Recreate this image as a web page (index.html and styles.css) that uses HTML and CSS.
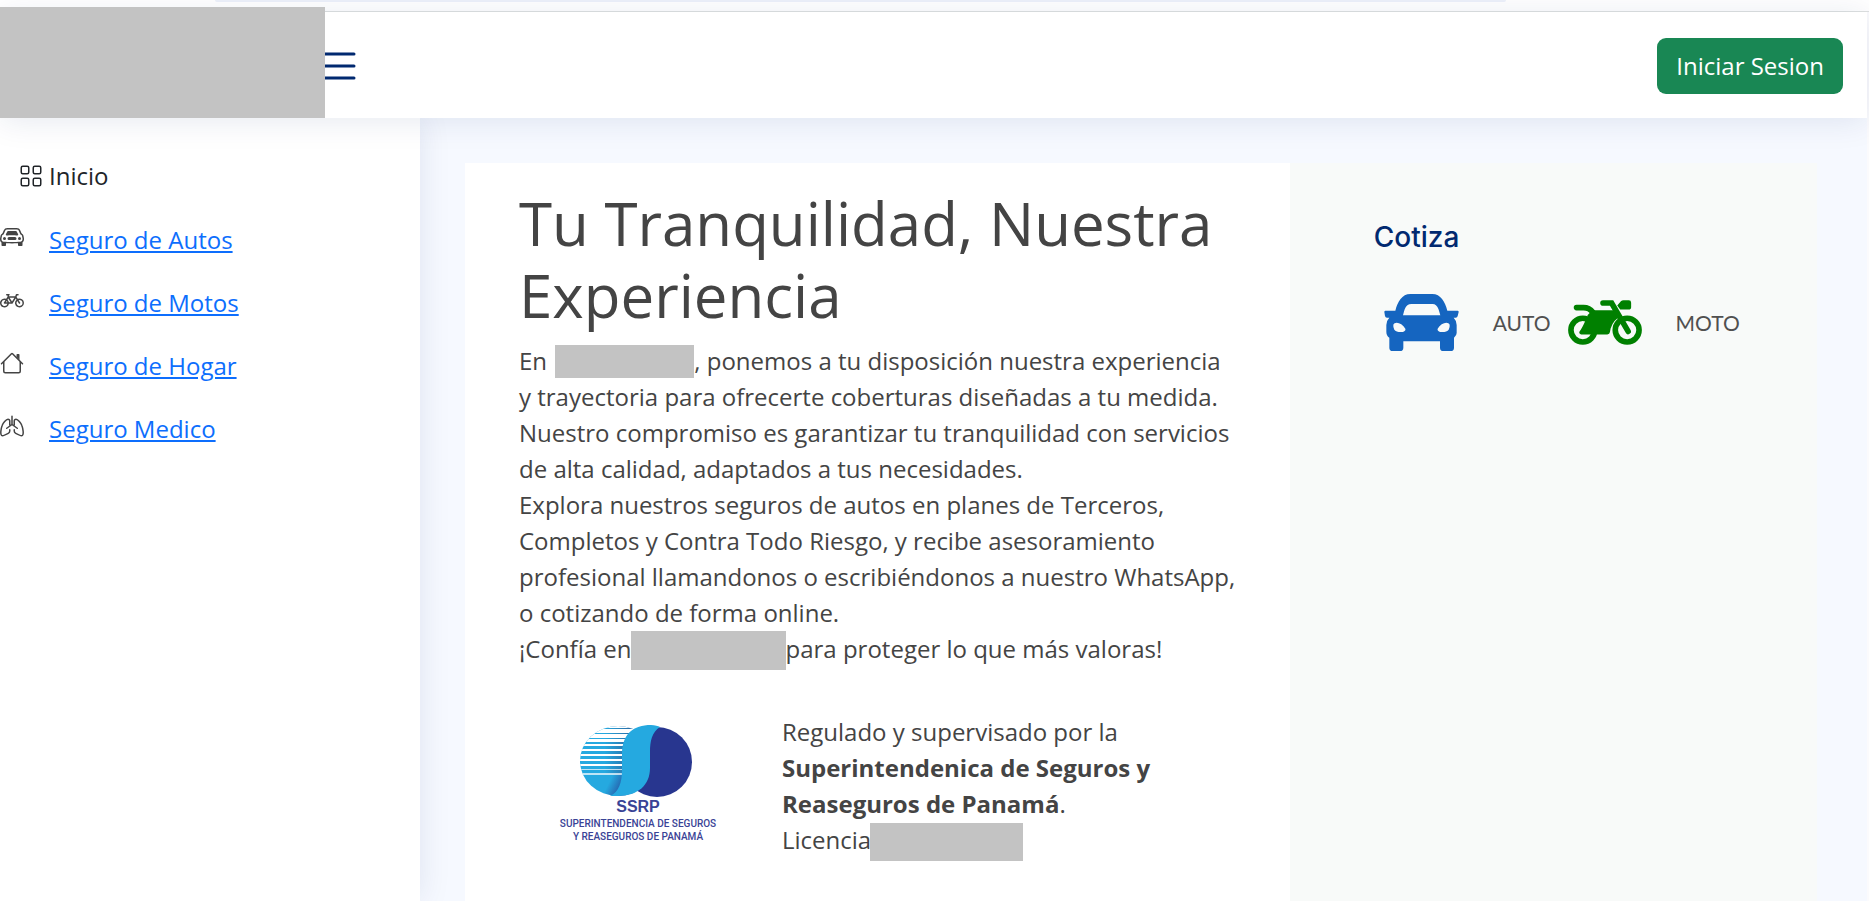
FILE: index.html
```html
<!DOCTYPE html>
<html lang="es">
<head>
<meta charset="utf-8">
<title>Seguros</title>
<link rel="stylesheet" href="styles.css">
</head>
<body>
<div class="browser-edge"><div class="address-bar"></div></div>
<header class="header">
  <div class="brand"></div>
  <button class="toggle" type="button" aria-label="Menú">
    <svg viewBox="0 0 16 16" width="48" height="48" fill="none" stroke="currentColor" stroke-linecap="round"><path d="M3 4h10M3 8h10M3 12h10"/></svg>
  </button>
  <button class="login" type="button">Iniciar Sesion</button>
</header>
<div class="body">
  <nav class="sidebar">
    <div class="home">
      <svg viewBox="0 0 16 16" width="24" height="24" fill="none" stroke="currentColor"><rect x="1.5" y="1.5" width="5" height="5" rx="1"/><rect x="9.5" y="1.5" width="5" height="5" rx="1"/><rect x="1.5" y="9.5" width="5" height="5" rx="1"/><rect x="9.5" y="9.5" width="5" height="5" rx="1"/></svg>
      <span>Inicio</span>
    </div>
    <ul class="menu">
      <li><svg viewBox="0 0 16 16" width="24" height="24" fill="currentColor"><path d="M4 9a1 1 0 1 1-2 0 1 1 0 0 1 2 0Zm10 0a1 1 0 1 1-2 0 1 1 0 0 1 2 0ZM6 8a1 1 0 0 0 0 2h4a1 1 0 1 0 0-2H6ZM4.862 4.276 3.906 6.19a.51.51 0 0 0 .497.731c.91-.073 2.35-.17 3.597-.17 1.247 0 2.688.097 3.597.17a.51.51 0 0 0 .497-.731l-.956-1.913A.5.5 0 0 0 10.691 4H5.309a.5.5 0 0 0-.447.276Z"/><path fill-rule="evenodd" d="M2.52 3.515A2.5 2.5 0 0 1 4.82 2h6.362c1 0 1.904.596 2.298 1.515l.792 1.848c.075.175.21.319.38.404.5.25.855.715.965 1.262l.335 1.679c.033.161.049.325.049.49v.413c0 .814-.39 1.543-1 1.997V13.5a.5.5 0 0 1-.5.5h-2a.5.5 0 0 1-.5-.5v-1.338c-1.292.048-2.745.088-4 .088s-2.708-.04-4-.088V13.5a.5.5 0 0 1-.5.5h-2a.5.5 0 0 1-.5-.5v-1.892c-.61-.454-1-1.183-1-1.997v-.413a2.5 2.5 0 0 1 .049-.49l.335-1.68c.11-.546.465-1.012.964-1.261a.807.807 0 0 0 .381-.404l.792-1.848ZM4.82 3a1.5 1.5 0 0 0-1.379.91l-.792 1.847a1.8 1.8 0 0 1-.853.904.807.807 0 0 0-.43.564L1.03 8.904a1.5 1.5 0 0 0-.03.294v.413c0 .796.62 1.448 1.408 1.484 1.555.07 3.786.155 5.592.155 1.806 0 4.037-.084 5.592-.155A1.479 1.479 0 0 0 15 9.611v-.413c0-.099-.01-.197-.03-.294l-.335-1.68a.807.807 0 0 0-.43-.563 1.807 1.807 0 0 1-.853-.904l-.792-1.848A1.5 1.5 0 0 0 11.18 3H4.82Z"/></svg><a href="#autos">Seguro de Autos</a></li>
      <li><svg viewBox="0 0 16 16" width="24" height="24" fill="currentColor"><path d="M4 4.5a.5.5 0 0 1 .5-.5H6a.5.5 0 0 1 0 1v.5h4.14l.386-1.158A.5.5 0 0 1 11 4h1a.5.5 0 0 1 0 1h-.64l-.311.935.807 1.29a3 3 0 1 1-.848.53l-.508-.812-2.076 3.322A.5.5 0 0 1 8 10.5H5.959a3 3 0 1 1-1.815-3.274L5 5.856V5h-.5a.5.5 0 0 1-.5-.5m1.5 2.443-.508.814c.5.444.85 1.054.967 1.743h1.139zM8 9.057 9.598 6.5H6.402zM4.937 9.5a2 2 0 0 0-.487-.877l-.548.877zM3.603 8.092A2 2 0 1 0 4.937 10.5H3a.5.5 0 0 1-.424-.765zm7.947.53a2 2 0 1 0 .848-.53l1.026 1.643a.5.5 0 1 1-.848.53z"/></svg><a href="#motos">Seguro de Motos</a></li>
      <li><svg viewBox="0 0 16 16" width="24" height="24" fill="currentColor"><path d="M2 13.5V7h1v6.5a.5.5 0 0 0 .5.5h9a.5.5 0 0 0 .5-.5V7h1v6.5a1.5 1.5 0 0 1-1.5 1.5h-9A1.5 1.5 0 0 1 2 13.5zm11-11V6l-2-2V2.5a.5.5 0 0 1 .5-.5h1a.5.5 0 0 1 .5.5z"/><path d="M7.293 1.5a1 1 0 0 1 1.414 0l6.647 6.646a.5.5 0 0 1-.708.708L8 2.207 1.354 8.854a.5.5 0 1 1-.708-.708L7.293 1.5z"/></svg><a href="#hogar">Seguro de Hogar</a></li>
      <li><svg viewBox="0 0 16 16" width="24" height="24" fill="none" stroke="currentColor" stroke-linecap="round" stroke-linejoin="round"><path d="M8 1.500V7L4.500 9.500M8 7l3.500 2.500M6.500 7.300V4.700C6.500 4 6 3.500 5.300 3.500 4 3.500 2 6.200 1.500 7.500 1 8.700-.5 14.500 1.700 14.500c.7 0 1.300-.3 3.800-1.600.6-.3 1-.9 1-1.500v-.9M9.500 7.300V4.700c0-.7.5-1.200 1.200-1.200C12 3.500 14 6.200 14.500 7.500 15 8.700 16.500 14.500 14.300 14.500c-.7 0-1.300-.3-3.800-1.600-.6-.3-1-.9-1-1.500v-.9"/></svg><a href="#medico">Seguro Medico</a></li>
    </ul>
  </nav>
  <main class="main">
    <section class="intro">
      <h1>Tu Tranquilidad, Nuestra Experiencia</h1>
      <p>En <span class="mask mask-name"></span>, ponemos a tu disposición nuestra experiencia<br>y trayectoria para ofrecerte coberturas diseñadas a tu medida.<br>Nuestro compromiso es garantizar tu tranquilidad con servicios<br>de alta calidad, adaptados a tus necesidades.</p>
      <p>Explora nuestros seguros de autos en planes de Terceros,<br>Completos y Contra Todo Riesgo, y recibe asesoramiento<br>profesional llamandonos o escribiéndonos a nuestro WhatsApp,<br>o cotizando de forma online.</p>
      <p>¡Confía en<span class="mask mask-trust"></span>para proteger lo que más valoras!</p>
      <div class="regulator">
        <svg class="ssrp" viewBox="0 0 180 126" width="180" height="126" role="img" aria-label="SSRP">
          <defs>
            <linearGradient id="shade" gradientUnits="userSpaceOnUse" x1="50" y1="55" x2="76" y2="68"><stop offset="0" stop-color="#25a9e0"/><stop offset=".3" stop-color="#25a9e0"/><stop offset=".9" stop-color="#26489a"/></linearGradient>
            <linearGradient id="lines" gradientUnits="userSpaceOnUse" x1="27" y1="0" x2="76" y2="0"><stop offset="0" stop-color="#25a9e0"/><stop offset=".5" stop-color="#25a9e0"/><stop offset="1" stop-color="#2a6fa8"/></linearGradient>
            <clipPath id="globe"><ellipse cx="65" cy="41" rx="38" ry="35"/></clipPath>
          </defs>
          <g clip-path="url(#globe)">
            <rect x="26" y="4" width="54" height="50" fill="url(#lines)"/>
            <rect x="26" y="54" width="54" height="24" fill="url(#shade)"/>
            <g fill="#fff"><path d="M26 4h54v4H26zM26 9h54v4H26zM26 14h54v4H26zM26 19h54v3H26z"/><path d="M26 24h54v2H26zM26 29h54v2H26zM26 34h54v2H26zM26 39h54v2H26zM26 44h54v2H26z"/><path d="M26 49h54v1H26zM26 53h54v2H26z" opacity=".7"/></g>
          </g>
          <ellipse cx="104" cy="42" rx="35" ry="35" fill="#28368f"/>
          <path d="M57 76C66 72 69 62 69 50V32C70 14 80 5 98 5c4 0 7 1 9 2C99 12 97 21 97 32v16c0 17-12 28-32 28Z" fill="#25a9e0"/>
          <text class="ssrp-name" x="85" y="92" text-anchor="middle">SSRP</text>
          <text class="ssrp-text" x="85" y="107" text-anchor="middle">SUPERINTENDENCIA DE SEGUROS</text>
          <text class="ssrp-text" x="85" y="120" text-anchor="middle">Y REASEGUROS DE PANAMÁ</text>
        </svg>
        <p>Regulado y supervisado por la<br><strong>Superintendenica de Seguros y<br>Reaseguros de Panamá</strong>.<br>Licencia<span class="mask mask-license"></span></p>
      </div>
    </section>
    <aside class="quote">
      <h2>Cotiza</h2>
      <div class="options">
        <svg class="car" viewBox="130 345 223 171" width="75" height="57"><path fill="#1565c0" fill-rule="evenodd" d="M133 395H163C170 368 183 345 208 345H274C299 345 312 368 319 395H350Q353 395 353 399L350 411Q349 416 344 416H338Q347 425 347 438V462Q347 470 339 476V506Q339 516 329 516H307Q297 516 297 506V487H187V506Q187 516 177 516H155Q145 516 145 506V476Q136 470 136 458V438Q136 425 145 416H138Q133 416 132 411L130 399Q130 395 133 395ZM186 409H298C294 396 291 375 275 375H211C193 375 190 394 186 409ZM157 437C161 426 183 430 193 449C197 462 166 462 160 452Q156 445 157 437ZM326 437C322 426 300 430 290 449C286 462 317 462 323 452Q327 445 326 437Z"/></svg>
        <span class="option-name">AUTO</span>
        <svg class="moto" viewBox="676 362 222 136" width="74" height="45"><g fill="none" stroke="#008000" stroke-width="17"><circle cx="720" cy="453" r="36"/><circle cx="854" cy="453" r="36"/><path stroke-linecap="round" d="M781 371H807L857 457M701 385H722Q740 385 750 399"/></g><path fill="#008000" d="M734 408Q740 399 752 393H815L834 412Q812 422 804 448L802 459Q801 466 794 466H715Q707 463 710 457Q717 449 728 424Q736 414 734 408ZM824 379 835 366Q838 363 843 363H859Q866 363 866 370V384Q866 391 858 391H833Z"/></svg>
        <span class="option-name">MOTO</span>
      </div>
    </aside>
  </main>
</div>
</body>
</html>
```
FILE: styles.css
```css
* { box-sizing: border-box; }
body {
  margin: 0;
  min-height: 100vh;
  display: flex;
  flex-direction: column;
  background: #fbfbfd;
  color: #444;
  font: 24px/36px "Open Sans", sans-serif;
}
h1, h2, p, ul { margin: 0; padding: 0; }
svg { display: block; flex: none; }
.browser-edge {
  height: 12px;
  padding: 0 19.4% 0 11.5%;
  background: #fff;
  border-bottom: 1px solid #dee1e0;
}
.address-bar { height: 2px; background: #edf1fa; border-radius: 0 0 12px 12px; }
.header {
  position: relative;
  z-index: 2;
  display: flex;
  align-items: center;
  height: 106px;
  margin-right: 2px;
  padding: 2px 24px 0 0;
  background: #fff;
  box-shadow: 0 3px 30px rgba(1, 41, 112, .1);
}
.brand {
  z-index: 1;
  align-self: flex-end;
  width: 325px;
  height: 111px;
  background: #c3c3c3;
}
.toggle {
  margin-left: -10px;
  padding: 0;
  border: 0;
  background: none;
  color: #012970;
}
.login {
  margin-left: auto;
  padding: 10px 19px;
  border: 0;
  border-radius: 9px;
  background: #198754;
  color: #fff;
  font: inherit;
}
.body { flex: 1; display: flex; margin-right: 2px; background: #f6f9ff; }
.sidebar {
  flex: none;
  width: 420px;
  padding-top: 40px;
  background: #fff;
  box-shadow: 0 0 30px rgba(1, 41, 112, .1);
}
.home {
  display: flex;
  align-items: center;
  gap: 6px;
  margin-bottom: 28px;
  padding-left: 19px;
  color: #212529;
}
.menu { display: grid; gap: 27px; list-style: none; }
.menu li { display: flex; gap: 25px; }
.menu svg { margin-top: 3px; }
.menu a { color: #0d6efd; }
.main {
  flex: 1;
  display: grid;
  grid-template-columns: minmax(0, 61fr) minmax(0, 39fr);
  padding: 45px 50px 0 45px;
}
.intro { padding: 24px 36px 36px 54px; background: #fff; }
.intro h1 { margin-bottom: 12px; font-size: 60px; line-height: 72px; font-weight: 400; }
.intro p { white-space: nowrap; }
.mask {
  display: inline-block;
  vertical-align: middle;
  margin: -9px 0 -7px -1px;
  background: #c3c3c3;
}
.mask-name { width: 139px; height: 33px; margin: -10px 0 -6px 2px; }
.mask-trust { width: 155px; height: 39px; }
.mask-license { width: 153px; height: 38px; }
.regulator { display: flex; gap: 49px; margin-top: 47px; padding-left: 34px; }
.ssrp { margin-top: 6px; overflow: visible; }
.ssrp-name { font: bold 16px "Liberation Sans", sans-serif; fill: #3a4396; }
.ssrp-text { font: 500 10px Roboto, sans-serif; fill: #3a4396; }
.quote { padding: 54px 84px; background: #f8faf9; }
.quote h2 {
  margin-bottom: 37px;
  color: #012970;
  font: 500 28px/40px Inter, sans-serif;
}
.options { display: flex; align-items: center; padding-left: 10px; }
.option-name { font: 400 21px/36px Lato, sans-serif; color: #505050; }
.car { margin-right: 34px; }
.moto { margin: 0 34px 0 17px; }
```
